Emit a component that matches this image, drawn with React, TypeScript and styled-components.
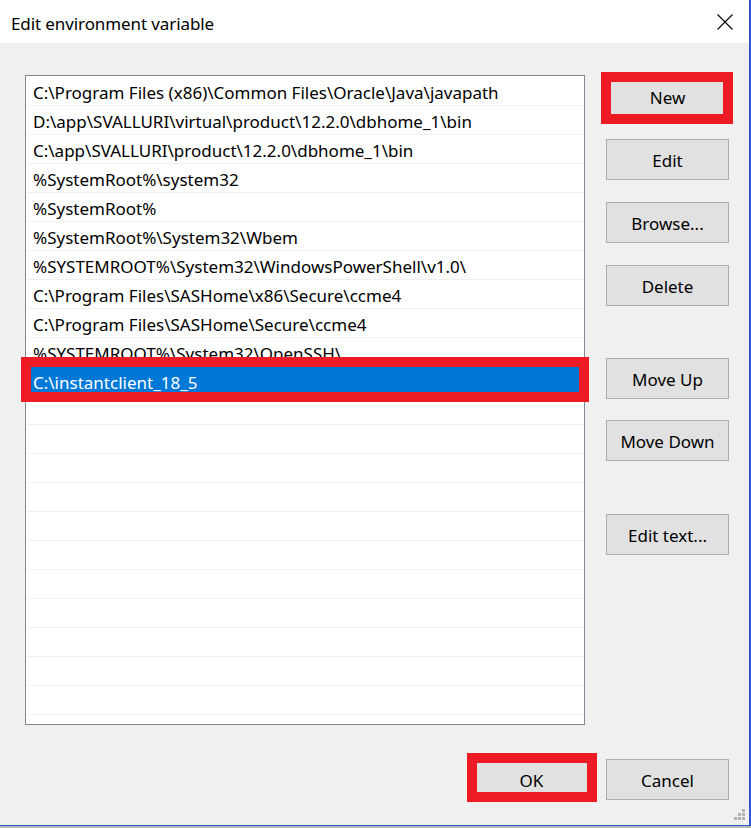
import React from "react";
import styled, { createGlobalStyle } from "styled-components";

const GlobalStyle = createGlobalStyle`
  html, body {
    margin: 0;
    padding: 0;
    background: #b9b9b9;
  }
  body {
    font-family: "Noto Sans", "Open Sans", sans-serif;
    font-size: 17px;
    color: #000;
  }
`;

const Window = styled.div`
  width: 749px;
  height: 825px;
  background: #f0f0f0;
  border-right: 2px solid #2f56c8;
  border-bottom: 1px solid #2f56c8;
  display: flex;
  flex-direction: column;
  position: relative;
`;

const TitleBar = styled.div`
  height: 43px;
  background: #fff;
  display: flex;
  align-items: center;
  justify-content: space-between;
  padding: 0 16px 0 11px;
  flex-shrink: 0;
`;

const Title = styled.span`
  font-size: 17px;
  letter-spacing: -0.1px;
  padding-top: 3px;
`;

const CloseIcon = styled.svg`
  width: 16px;
  height: 16px;
  margin-top: 0px;
`;

const Body = styled.div`
  flex: 1;
  display: flex;
  flex-direction: column;
  padding: 32px 20px 0 25px;
`;

const Main = styled.div`
  display: flex;
  gap: 21px;
`;

const ListBox = styled.div`
  width: 558px;
  height: 647px;
  background: #fff;
  border: 1px solid #828790;
  padding-top: 1px;
  box-sizing: content-box;
`;

const Row = styled.div`
  position: relative;
  height: 28px;
  border-bottom: 1px solid #f0f0f0;
  margin: 0 1px;
  display: flex;
  align-items: center;
`;

const RowFill = styled.div<{ $selected?: boolean }>`
  flex: 1;
  height: 100%;
  display: flex;
  align-items: center;
  padding-left: 6px;
  padding-top: 2px;
  box-sizing: border-box;
  white-space: nowrap;
  background: ${p => (p.$selected ? "#0078d7" : "transparent")};
  color: ${p => (p.$selected ? "#fff" : "#000")};
`;

const Frame = styled.div<{ $t: number; $r: number; $b: number; $l: number }>`
  position: absolute;
  top: ${p => p.$t}px;
  right: ${p => p.$r}px;
  bottom: ${p => p.$b}px;
  left: ${p => p.$l}px;
  border: 10px solid #ed1c24;
  pointer-events: none;
`;

const ButtonColumn = styled.div`
  display: flex;
  flex-direction: column;
  padding-top: 1px;
`;

const ButtonGroup = styled.div<{ $space: number; $gap: number }>`
  display: flex;
  flex-direction: column;
  gap: ${p => p.$gap}px;
  margin-top: ${p => p.$space}px;
`;

const Slot = styled.div`
  position: relative;
  width: 123px;
  height: 41px;
`;

const Button = styled.button`
  width: 100%;
  height: 100%;
  background: #e1e1e1;
  border: 1px solid #adadad;
  font-family: "Noto Sans", "Open Sans", sans-serif;
  font-size: 17px;
  color: #000;
  padding: 2px 0 0;
  margin: 0;
`;

const Footer = styled.div`
  display: flex;
  justify-content: flex-end;
  gap: 13px;
  margin-top: 34px;
`;

const Grip = styled.svg`
  position: absolute;
  right: 3px;
  bottom: 4px;
  width: 12px;
  height: 12px;
`;

const paths = [
  "C:\\Program Files (x86)\\Common Files\\Oracle\\Java\\javapath",
  "D:\\app\\SVALLURI\\virtual\\product\\12.2.0\\dbhome_1\\bin",
  "C:\\app\\SVALLURI\\product\\12.2.0\\dbhome_1\\bin",
  "%SystemRoot%\\system32",
  "%SystemRoot%",
  "%SystemRoot%\\System32\\Wbem",
  "%SYSTEMROOT%\\System32\\WindowsPowerShell\\v1.0\\",
  "C:\\Program Files\\SASHome\\x86\\Secure\\ccme4",
  "C:\\Program Files\\SASHome\\Secure\\ccme4",
  "%SYSTEMROOT%\\System32\\OpenSSH\\",
  "C:\\instantclient_18_5",
];

const ROWS = 22;

type Box = { t: number; r: number; b: number; l: number };

const DialogButton = ({ label, mark }: { label: string; mark?: Box }) => (
  <Slot>
    <Button>{label}</Button>
    {mark && <Frame $t={mark.t} $r={mark.r} $b={mark.b} $l={mark.l} />}
  </Slot>
);

export default function App() {
  const rows = Array.from({ length: ROWS }, (_, i) => paths[i] ?? "");
  const selected = paths.length - 1;

  return (
    <>
      <GlobalStyle />
      <Window>
        <TitleBar>
          <Title>Edit environment variable</Title>
          <CloseIcon viewBox="0 0 16 16">
            <path d="M0.5 0.5 L15.5 15.5 M15.5 0.5 L0.5 15.5" stroke="#000" strokeWidth="1.1" fill="none" />
          </CloseIcon>
        </TitleBar>
        <Body>
          <Main>
            <ListBox>
              {rows.map((text, i) => (
                <Row key={i}>
                  <RowFill $selected={i === selected}>{text}</RowFill>
                  {i === selected && <Frame $t={-10} $r={-6} $b={-7} $l={-6} />}
                </Row>
              ))}
            </ListBox>
            <ButtonColumn>
              <ButtonGroup $space={0} $gap={22}>
                <DialogButton label="New" mark={{ t: -4, r: -4, b: -7, l: -5 }} />
                <DialogButton label="Edit" />
                <DialogButton label="Browse..." />
                <DialogButton label="Delete" />
              </ButtonGroup>
              <ButtonGroup $space={52} $gap={21}>
                <DialogButton label="Move Up" />
                <DialogButton label="Move Down" />
              </ButtonGroup>
              <ButtonGroup $space={53} $gap={21}>
                <DialogButton label="Edit text..." />
              </ButtonGroup>
            </ButtonColumn>
          </Main>
          <Footer>
            <DialogButton label="OK" mark={{ t: -6, r: -4, b: -2, l: -3 }} />
            <DialogButton label="Cancel" />
          </Footer>
        </Body>
        <Grip viewBox="0 0 12 12">
          <g fill="#b3b3b3">
            <rect x="8" y="0" width="3" height="3" />
            <rect x="4" y="4" width="3" height="3" />
            <rect x="8" y="4" width="3" height="3" />
            <rect x="0" y="8" width="3" height="3" />
            <rect x="4" y="8" width="3" height="3" />
            <rect x="8" y="8" width="3" height="3" />
          </g>
        </Grip>
      </Window>
    </>
  );
}
